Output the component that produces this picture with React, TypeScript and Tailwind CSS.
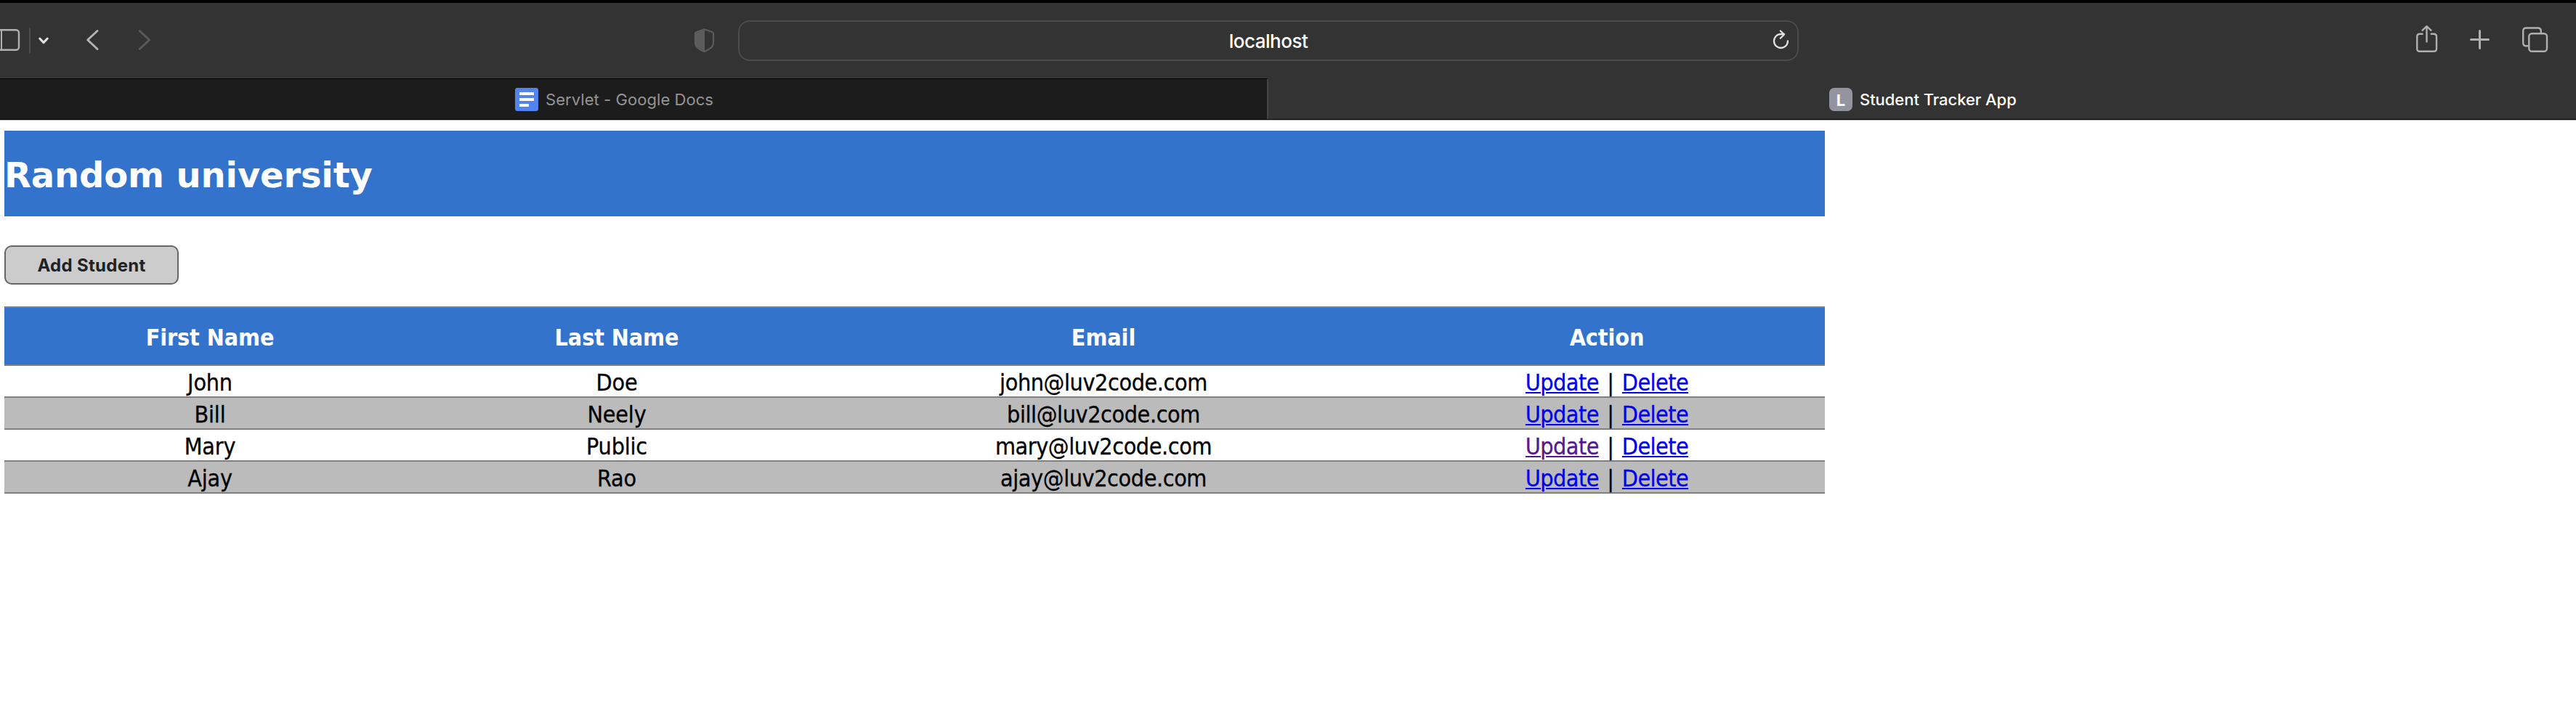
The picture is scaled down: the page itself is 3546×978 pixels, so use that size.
const students = [
  { first: "John", last: "Doe", email: "john@luv2code.com", visited: false },
  { first: "Bill", last: "Neely", email: "bill@luv2code.com", visited: false },
  { first: "Mary", last: "Public", email: "mary@luv2code.com", visited: true },
  { first: "Ajay", last: "Rao", email: "ajay@luv2code.com", visited: false },
];

function Toolbar() {
  return (
    <div className="flex h-[104px] items-center bg-[#333333] pr-9">
      <svg className="h-12 w-7" viewBox="0 32 28 48" fill="none" stroke="#b0b0b0" strokeWidth="2.4">
        <rect x="-14" y="41.2" width="40" height="27.6" rx="4" />
        <path d="M2 41v28" strokeWidth="2" />
      </svg>
      <div className="ml-3 h-9 w-0.5 bg-[#4a4a4a]" />
      <svg className="ml-2 h-12 w-5" viewBox="50 32 20 48" fill="none" stroke="#e2e2e2" strokeWidth="3" strokeLinecap="round" strokeLinejoin="round">
        <path d="M54.7 53l5.3 5.6 5.3-5.6" />
      </svg>
      <svg className="ml-[46px] h-12 w-6" viewBox="116 32 24 48" fill="none" stroke="#b4b4b4" strokeWidth="3" strokeLinecap="round" strokeLinejoin="round">
        <path d="M134 42.5L120.7 55 134 67.5" />
      </svg>
      <svg className="ml-12 h-12 w-6" viewBox="188 32 24 48" fill="none" stroke="#5a5a5a" strokeWidth="3" strokeLinecap="round" strokeLinejoin="round">
        <path d="M192.3 42.5L205.6 55l-13.3 12.5" />
      </svg>
      <svg className="ml-[740px] h-12 w-9" viewBox="952 32 36 48">
        <path d="M969.5 40.2l11.3 4.1q1.2.5 1.2 2v12.5q0 4.5-3.5 7.2-4 3-9 5.2-5-2.2-9-5.2-3.5-2.7-3.5-7.2v-12.5q0-1.5 1.2-2z" fill="none" stroke="#5c5c5c" strokeWidth="2.2" strokeLinejoin="round" />
        <path d="M970 39.5v32l-5-2.8-5.5-4q-3-2.500-3-6v-13l1.5-1.8z" fill="#5c5c5c" />
      </svg>
      <div className="relative ml-7 flex h-14 w-[1460px] items-center justify-center rounded-2xl border-2 border-[#4b4b4b]">
        <span className="text-[26px] font-medium tracking-[-0.5px] text-white">localhost</span>
        <svg className="absolute top-1 right-2 h-12 w-7" viewBox="2438 34 28 48" fill="none" stroke="#e0e0e0" strokeWidth="2.3" strokeLinecap="round" strokeLinejoin="round">
          <path d="M2461 56.500a9.500 9.500 0 1 1-9.500-9.500h4.200" />
          <path d="M2450.8 42.5l5.2 5-5.2 5.3" />
        </svg>
      </div>
      <div className="ml-auto flex gap-9">
        <svg className="h-12 w-[38px]" viewBox="3322 32 38 48" fill="none" stroke="#b0b0b0" strokeWidth="2.4" strokeLinecap="round" strokeLinejoin="round">
          <path d="M3334.5 46.700h-3.500q-3.800 0-3.800 3.800v16.500q0 3.800 3.800 3.800h19.200q3.800 0 3.800-3.800v-16.500q0-3.800-3.800-3.800h-3.500" />
          <path d="M3340.5 57.5V36.5M3334.5 41.8l6-5.6 6 5.6" />
        </svg>
        <svg className="h-12 w-9" viewBox="3396 32 36 48" fill="none" stroke="#b0b0b0" strokeWidth="3" strokeLinecap="round">
          <path d="M3401.5 54.5h24M3413.5 42.500v24" />
        </svg>
        <svg className="h-12 w-[42px]" viewBox="3468 32 42 48" fill="none" stroke="#b0b0b0" strokeWidth="2.4">
          <rect x="3481.3" y="46.3" width="24.7" height="24.5" rx="4" />
          <path d="M3480.5 63.300h-3q-4.300 0-4.300-4.300v-16.200q0-4.300 4.300-4.300h16q4.300 0 4.300 4.300v3" />
        </svg>
      </div>
    </div>
  );
}

function TabBar() {
  return (
    <div className="flex h-14 text-[22px]">
      <div className="flex w-[1746px] items-center gap-2.5 border-t border-r-2 border-t-black border-r-[#444444] bg-[#1c1c1c] pt-px pl-[709px] text-[#949494]">
        <svg className="size-8" viewBox="0 0 32 32">
          <rect width="32" height="32" rx="3" fill="#5383ec" />
          <path d="M6 6h20v4H6zM6 14h20v4H6zM6 22h13v4H6z" fill="white" />
        </svg>
        <span className="tracking-[0.06px]">Servlet - Google Docs</span>
      </div>
      <div className="flex flex-1 items-center gap-2.5 bg-[#333333] pt-0.5 pl-[772px] font-medium text-white">
        <div className="flex size-8 items-center justify-center rounded-[7px] bg-[#9494a1] pt-0.5 font-bold">L</div>
        <span className="tracking-[-0.05px]">Student Tracker App</span>
      </div>
    </div>
  );
}

function StudentTable() {
  const th = "h-[82px] border-y-2 border-[#808080] p-0 pt-1 font-bold leading-[74px]";
  const td = "h-11 border-b-2 border-[#808080] p-0 pt-1 leading-[38px] [-webkit-text-stroke-width:0.3px]";
  const link = "underline decoration-2";
  return (
    <table className="mt-[30px] w-[2506px] table-fixed border-separate border-spacing-0 text-center text-[32px]">
      <colgroup>
        <col className="w-[566px]" />
        <col className="w-[554px]" />
        <col className="w-[786px]" />
        <col className="w-[600px]" />
      </colgroup>
      <thead>
        <tr className="bg-[#3373cc] tracking-[-0.1px] text-white">
          <th className={th}>First Name</th>
          <th className={th}>Last Name</th>
          <th className={th}>Email</th>
          <th className={th}>Action</th>
        </tr>
      </thead>
      <tbody>
        {students.map((s) => (
          <tr key={s.email} className="even:bg-[#bbbbbb]">
            <td className={`${td} tracking-[-0.2px]`}>{s.first}</td>
            <td className={`${td} tracking-[-0.2px]`}>{s.last}</td>
            <td className={`${td} tracking-[-0.4px]`}>{s.email}</td>
            <td className={td}>
              <div className="flex justify-center tracking-[-0.55px] underline-offset-2">
                <a href="#" className={`${link} ${s.visited ? "text-[#551a8b]" : "text-[#0000ee]"}`}>Update</a>
                <span className="w-8">|</span>
                <a href="#" className={`${link} text-[#0000ee]`}>Delete</a>
              </div>
            </td>
          </tr>
        ))}
      </tbody>
    </table>
  );
}

export default function App() {
  return (
    <div className="h-[978px] overflow-hidden bg-white font-['Inter',sans-serif]">
      <header className="border-t-4 border-b border-t-black border-b-[#b4b4b4]">
        <Toolbar />
        <div className="border-b border-black">
          <TabBar />
        </div>
      </header>
      <main className="pt-3.5 pl-1.5 font-['DejaVu_Sans_Condensed','DejaVu_Sans',sans-serif] text-black">
        <h2 className="h-[118px] w-[2506px] bg-[#3373cc] pt-1 font-['DejaVu_Sans',sans-serif] text-[48px] leading-[114px] font-bold tracking-[-0.15px] text-white">Random university</h2>
        <button className="mt-10 block h-[54px] w-60 rounded-[10px] border-2 border-[#666666] bg-[#cccccc] pt-px font-['Inter',sans-serif] text-[24px] font-bold tracking-[0.3px] text-[#222222]">Add Student</button>
        <StudentTable />
      </main>
    </div>
  );
}
